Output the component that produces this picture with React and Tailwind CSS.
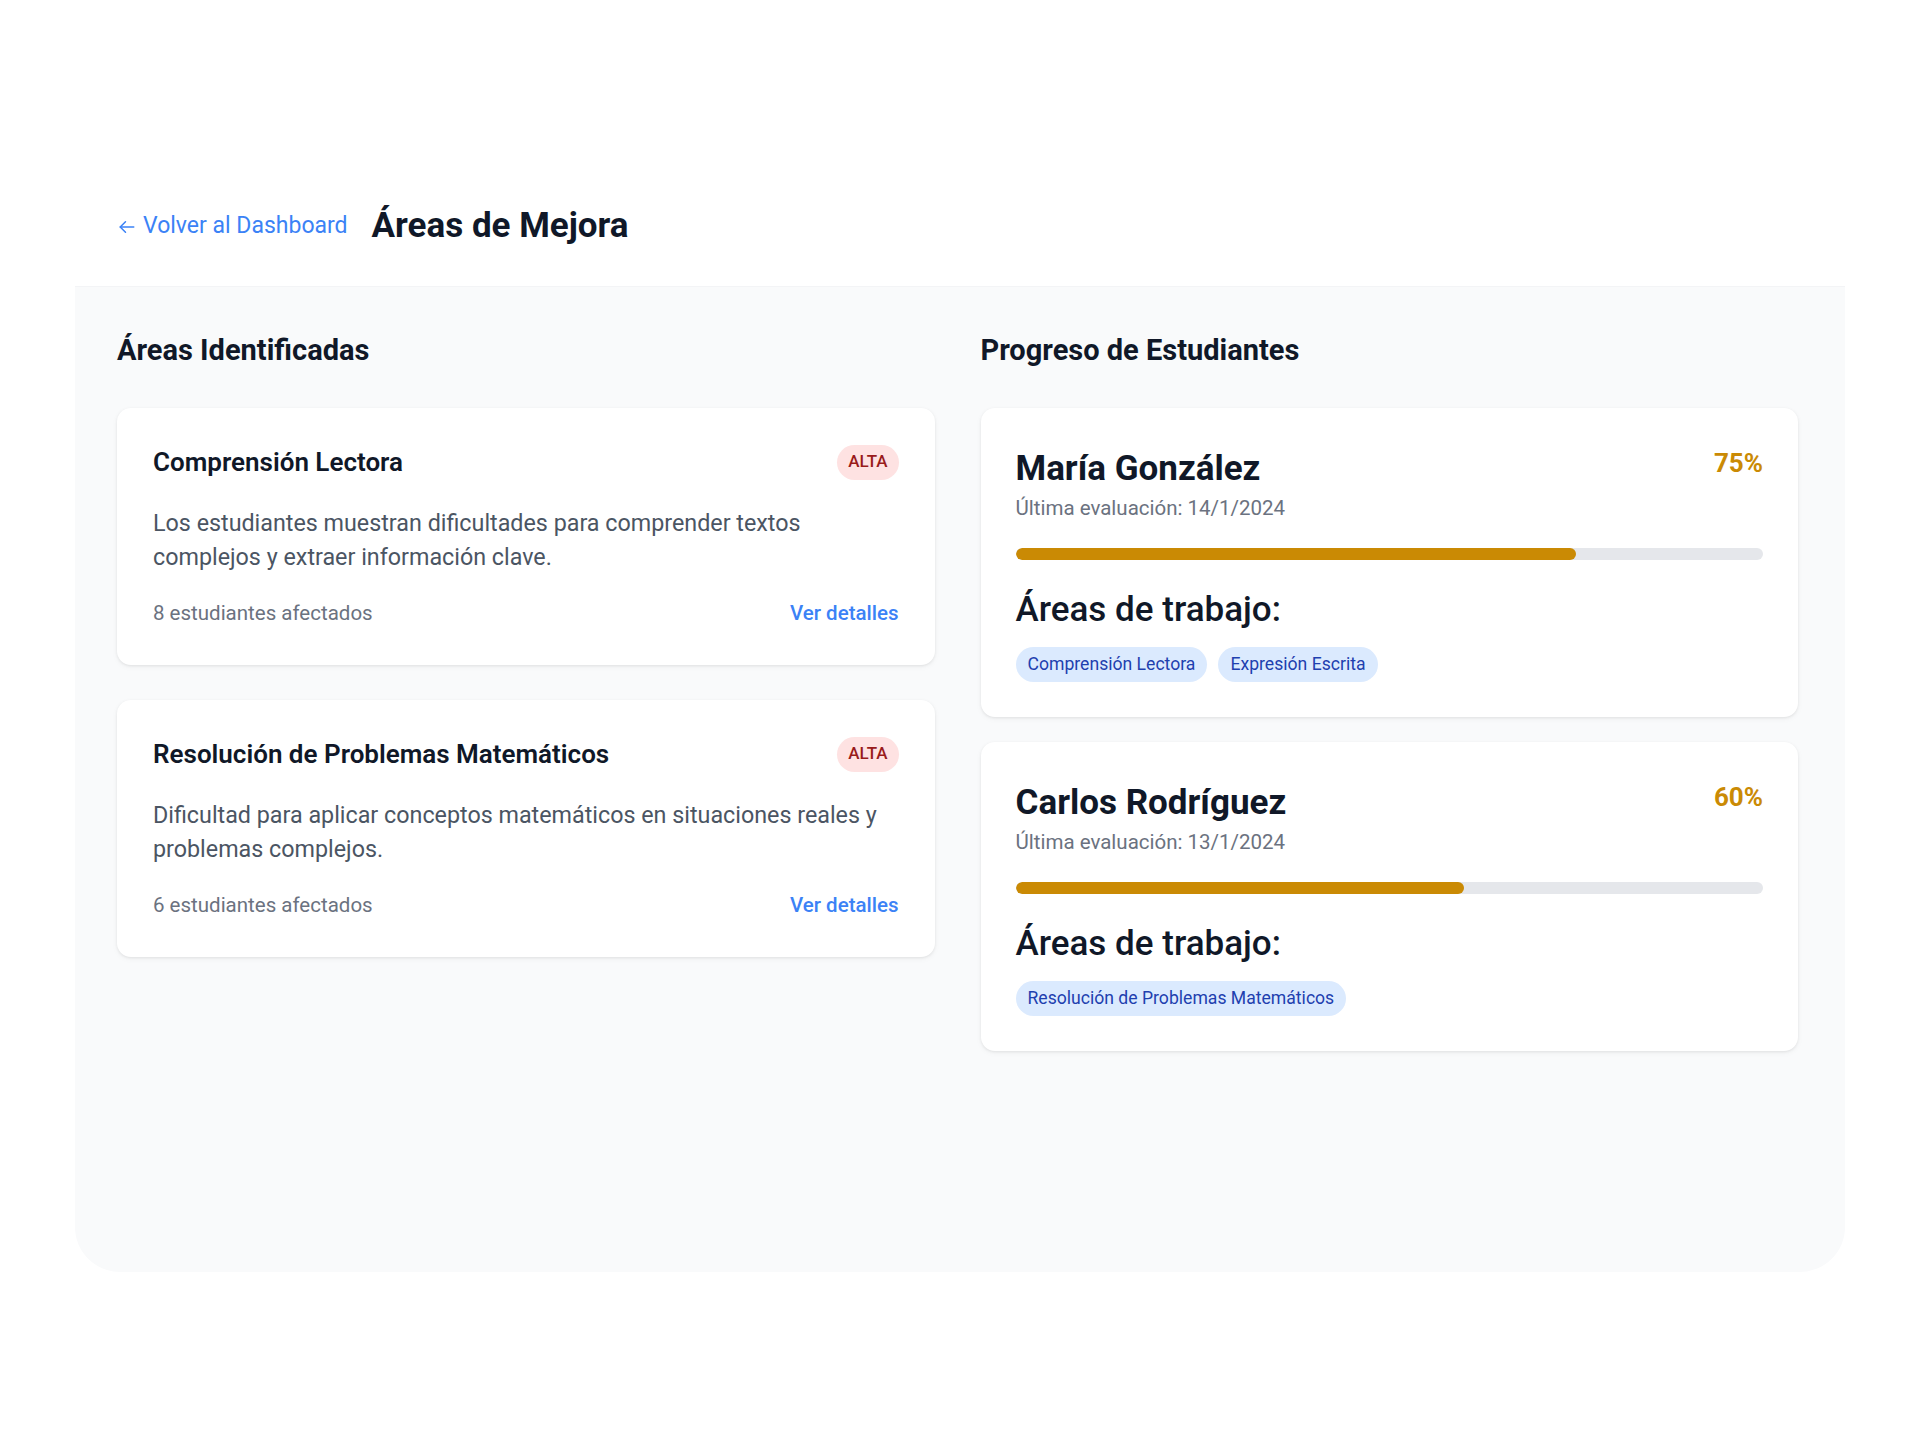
import React from 'react';

const areas = [
  {
    id: 1,
    title: 'Comprensión Lectora',
    priority: 'ALTA',
    description: 'Los estudiantes muestran dificultades para comprender textos complejos y extraer información clave.',
    affected: 8,
  },
  {
    id: 2,
    title: 'Resolución de Problemas Matemáticos',
    priority: 'ALTA',
    description: 'Dificultad para aplicar conceptos matemáticos en situaciones reales y problemas complejos.',
    affected: 6,
  },
];

const students = [
  {
    id: 1,
    name: 'María González',
    lastEval: '14/1/2024',
    progress: 75,
    areas: ['Comprensión Lectora', 'Expresión Escrita'],
  },
  {
    id: 2,
    name: 'Carlos Rodríguez',
    lastEval: '13/1/2024',
    progress: 60,
    areas: ['Resolución de Problemas Matemáticos'],
  },
];

const AreaCard = ({ area }) => (
  <div className="bg-white rounded-[14px] shadow-[0_1px_3px_rgba(0,0,0,0.08),0_2px_6px_rgba(0,0,0,0.04)] px-[36px] pt-[36px] pb-[37px]">
    <div className="flex items-center justify-between h-[36px]">
      <h3 className="text-[26px] font-semibold text-gray-900 leading-[36px]">{area.title}</h3>
      <span className="bg-[#fee2e2] text-[#991b1b] text-[17px] font-medium px-[11px] h-[35px] flex items-center rounded-full">
        {area.priority}
      </span>
    </div>
    <p className="mt-[26px] text-[23.3px] leading-[34px] text-[#4b5563]">{area.description}</p>
    <div className="mt-[24px] flex items-center justify-between text-[20.5px] leading-[30px]">
      <span className="text-[#6b7280]">{area.affected} estudiantes afectados</span>
      <button className="text-[#3b82f6] font-medium">Ver detalles</button>
    </div>
  </div>
);

const StudentCard = ({ student }) => (
  <div className="bg-white rounded-[14px] shadow-[0_1px_3px_rgba(0,0,0,0.08),0_2px_6px_rgba(0,0,0,0.04)] px-[35px] pt-[38px] pb-[35px]">
    <div className="flex items-start justify-between">
      <div>
        <h3 className="text-[35px] font-bold text-gray-900 leading-[45px]">{student.name}</h3>
        <p className="mt-[2px] text-[20.5px] leading-[30px] text-[#6b7280]">Última evaluación: {student.lastEval}</p>
      </div>
      <span className="text-[26px] font-bold text-[#ca8a04] leading-[35px]">{student.progress}%</span>
    </div>
    <div className="mt-[25px] h-[12px] bg-[#e5e7eb] rounded-full overflow-hidden">
      <div className="h-full bg-[#ca8a04] rounded-full" style={{ width: `${student.progress}%` }} />
    </div>
    <h4 className="mt-[29px] text-[35px] font-medium text-gray-900 leading-[42px]">Áreas de trabajo:</h4>
    <div className="mt-[16px] flex flex-wrap gap-[11px]">
      {student.areas.map(a => (
        <span key={a} className="bg-[#dbeafe] text-[#1e40af] text-[17.6px] leading-[25px] px-[12px] py-[5px] rounded-full">
          {a}
        </span>
      ))}
    </div>
  </div>
);

export default function App() {
  return (
    <div className="min-h-screen bg-white pt-[165px] px-[75px] font-[Roboto,sans-serif]">
      <div className="rounded-[45px] overflow-hidden bg-white">
        <header className="h-[122px] border-b border-gray-100 px-[43px] flex items-center gap-[24px]">
          <a href="#" className="flex items-center gap-[7px] text-[#3b82f6] text-[23px] leading-[34px]">
            <svg width="18" height="18" viewBox="0 0 24 24" fill="none" stroke="currentColor" strokeWidth="2" strokeLinecap="round" strokeLinejoin="round" className="mt-[2px]">
              <path d="M21 12H3" />
              <path d="M10 5l-7 7 7 7" />
            </svg>
            Volver al Dashboard
          </a>
          <h1 className="text-[35px] font-bold text-gray-900 leading-[45px]">Áreas de Mejora</h1>
        </header>

        <main className="bg-gray-50 h-[985px] pl-[42px] pr-[47px] pt-[43px]">
          <div className="grid grid-cols-2 gap-[46px]">
            <section>
              <h2 className="text-[29px] font-bold text-gray-900 leading-[40px] mb-[38px]">Áreas Identificadas</h2>
              <div className="flex flex-col gap-[35px]">
                {areas.map(area => (
                  <AreaCard key={area.id} area={area} />
                ))}
              </div>
            </section>
            <section>
              <h2 className="text-[29px] font-bold text-gray-900 leading-[40px] mb-[38px]">Progreso de Estudiantes</h2>
              <div className="flex flex-col gap-[25px]">
                {students.map(s => (
                  <StudentCard key={s.id} student={s} />
                ))}
              </div>
            </section>
          </div>
        </main>
      </div>
    </div>
  );
}
